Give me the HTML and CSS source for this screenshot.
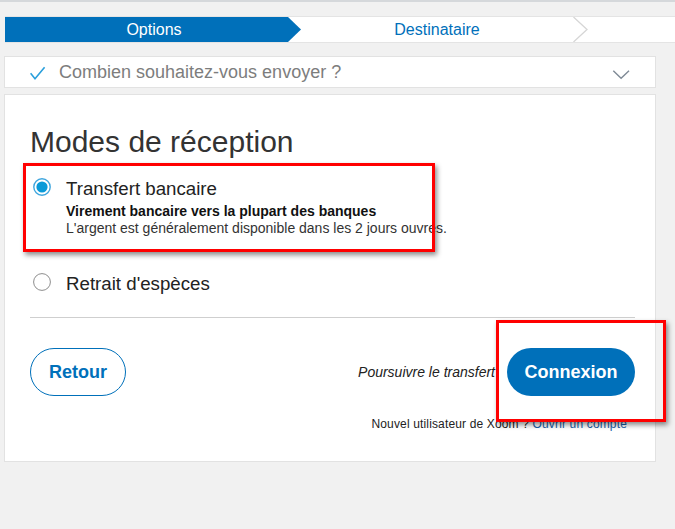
FILE: index.html
```html
<!DOCTYPE html>
<html lang="fr">
<head>
<meta charset="utf-8">
<title>Modes de réception</title>
<link rel="stylesheet" href="styles.css">
</head>
<body>
<div class="screen">
  <div class="topline"></div>
  <div class="stepper">
    <div class="step step-active">Options</div>
    <svg class="step-arrow" width="13" height="25" viewBox="0 0 13 25"><polygon points="0,0 13,12.5 0,25" fill="#0070ba"/></svg>
    <div class="step step-next">Destinataire</div>
    <svg class="step-chevron" width="15" height="25" viewBox="0 0 15 25"><polyline points="0.5,0 14,12.5 0.5,25" fill="none" stroke="#d6d6d6" stroke-width="1.3"/></svg>
    <div class="step step-rest"></div>
  </div>

  <div class="summary">
    <svg class="summary-check" width="16" height="18" viewBox="0 0 16 18"><polyline points="0.6,10.3 5,15.8 14.6,4.3" fill="none" stroke="#2a9fdb" stroke-width="1.6"/></svg>
    <span class="summary-text">Combien souhaitez-vous envoyer ?</span>
    <svg class="summary-chevron" width="18" height="16" viewBox="0 0 18 16"><polyline points="1.3,6.7 9.1,14.3 17,6.7" fill="none" stroke="#7f8a96" stroke-width="1.4"/></svg>
  </div>

  <div class="card">
    <h1 class="card-title">Modes de réception</h1>

    <div class="option option-first">
      <svg class="radio" width="18" height="18" viewBox="0 0 18 18"><circle cx="9" cy="9" r="8.2" fill="#fff" stroke="#3fa6de" stroke-width="1.4"/><circle cx="9" cy="9" r="5.6" fill="#0a9ad8"/></svg>
      <div class="option-body">
        <div class="option-title">Transfert bancaire</div>
        <div class="option-sub">Virement bancaire vers la plupart des banques</div>
        <div class="option-note">L'argent est généralement disponible dans les 2 jours ouvres.</div>
      </div>
    </div>

    <div class="option option-second">
      <svg class="radio" width="18" height="18" viewBox="0 0 18 18"><circle cx="9" cy="9" r="8.4" fill="#fff" stroke="#8d8d8d" stroke-width="1"/></svg>
      <div class="option-body">
        <div class="option-title">Retrait d'espèces</div>
      </div>
    </div>

    <div class="divider"></div>

    <div class="actions">
      <button class="btn btn-outline">Retour</button>
      <div class="actions-right">
        <span class="continue">Poursuivre le transfert</span>
        <button class="btn btn-primary">Connexion</button>
      </div>
    </div>

    <p class="signup">Nouvel utilisateur de Xoom ? <a class="signup-link" href="#">Ouvrir un compte</a></p>
  </div>

  <div class="annot annot-option"></div>
  <div class="annot annot-login"></div>
</div>
</body>
</html>
```

FILE: styles.css
```css
* {
  box-sizing: border-box;
}

html, body {
  margin: 0;
  padding: 0;
}

body {
  background: #f1f1f1;
  font-family: "Liberation Sans", Arial, sans-serif;
  color: #222;
  overflow: hidden;
}

.screen {
  position: relative;
  width: 675px;
  height: 529px;
  overflow: hidden;
}

.topline {
  height: 2px;
  background: #d5d8db;
}

/* Stepper */
.stepper {
  display: flex;
  margin: 14px 0 0 5px;
  height: 27px;
  border-top: 1px solid #e4e4e4;
  border-bottom: 1px solid #e4e4e4;
  background: #fff;
}

.step {
  height: 25px;
  line-height: 25px;
  font-size: 16px;
  text-align: center;
}

.step-active {
  width: 283px;
  padding-left: 15px;
  background: #0070ba;
  color: #fff;
}

.step-arrow,
.step-chevron {
  display: block;
  flex: none;
}

.step-next {
  width: 272px;
  color: #0070ba;
}

.step-rest {
  flex: 1;
}

/* Summary panel */
.summary {
  display: flex;
  align-items: center;
  margin: 13px 0 0 4px;
  width: 652px;
  height: 32px;
  padding: 0 25px 0 25px;
  background: #fff;
  border: 1px solid #e2e2e2;
}

.summary-check {
  display: block;
  flex: none;
  margin-right: 13px;
}

.summary-text {
  font-size: 18px;
  line-height: 30px;
  color: #7d7d7d;
}

.summary-chevron {
  display: block;
  flex: none;
  margin-left: auto;
}

/* Card */
.card {
  margin: 6px 0 0 4px;
  width: 652px;
  padding: 29px 20px 30px 25px;
  background: #fff;
  border: 1px solid #e2e2e2;
}

.card-title {
  margin: 0;
  font-size: 30px;
  line-height: 36px;
  font-weight: normal;
  color: #333;
}

.option {
  display: flex;
  align-items: flex-start;
}

.option-first {
  margin-top: 18px;
}

.option-second {
  margin-top: 36px;
}

.radio {
  display: block;
  flex: none;
  margin: 0 15px 0 3px;
}

.option-title {
  font-size: 18.7px;
  line-height: 22px;
  color: #222;
}

.option-sub {
  margin-top: 3px;
  font-size: 14px;
  line-height: 17px;
  font-weight: bold;
  color: #111;
}

.option-note {
  font-size: 14px;
  line-height: 17px;
  color: #333;
}

.divider {
  margin-top: 22px;
  height: 1px;
  background: #cfcfcf;
}

.actions {
  display: flex;
  justify-content: space-between;
  align-items: center;
  margin-top: 30px;
}

.actions-right {
  display: flex;
  align-items: center;
  gap: 12px;
}

.btn {
  height: 48px;
  border-radius: 24px;
  font-family: "Liberation Sans", Arial, sans-serif;
  font-size: 18px;
  font-weight: bold;
  cursor: pointer;
}

.btn-outline {
  padding: 0 18px;
  background: #fff;
  border: 1px solid #0070ba;
  color: #0070ba;
}

.btn-primary {
  padding: 0 17.5px;
  background: #0070ba;
  border: 0;
  color: #fff;
}

.continue {
  font-size: 14px;
  font-style: italic;
  color: #222;
}

.signup {
  margin: 21px 0 0;
  padding-right: 8px;
  text-align: right;
  font-size: 12px;
  line-height: 14px;
  letter-spacing: 0.15px;
  color: #222;
}

.signup-link {
  color: #1a5ea8;
  text-decoration: none;
}

/* Red annotation boxes */
.annot {
  position: absolute;
  border: 3px solid #ff0000;
  box-shadow: 2px 3px 5px rgba(0, 0, 0, 0.45);
}

.annot-option {
  left: 23px;
  top: 163px;
  width: 412px;
  height: 89px;
}

.annot-login {
  left: 496px;
  top: 320px;
  width: 170px;
  height: 102px;
}
```
